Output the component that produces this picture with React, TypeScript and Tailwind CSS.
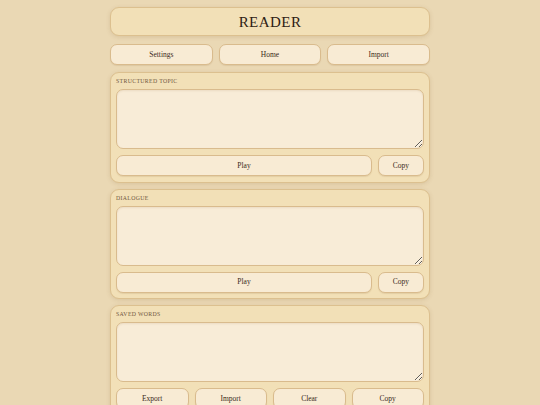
import * as React from 'react'

const serif = { fontFamily: '"Liberation Serif", Georgia, serif' }

function Btn({ label, className = '' }: { label: string; className?: string }) {
  return (
    <button
      type="button"
      className={`h-[21px] rounded-[7px] border border-[#d9bb8d] bg-[#f8ebd4] text-[7.5px] text-[#3a2a1a] shadow-[0_1px_1px_rgba(150,110,60,0.15)] ${className}`}
    >
      {label}
    </button>
  )
}

function Section({ title, children }: { title: string; children: React.ReactNode }) {
  return (
    <section className="rounded-[9px] border border-[#dcc08f] bg-[#f2e0b7] px-[5px] pb-[5.5px] pt-[3px] shadow-[0_1px_4px_rgba(140,100,50,0.18)]">
      <div className="mb-[4px] h-[9px] text-[5.8px] uppercase leading-[10px] tracking-[0.06em] text-[#6f5640]">
        {title}
      </div>
      <textarea className="block h-[60px] w-full rounded-[7px] border border-[#d9bb8d] bg-[#f8ecd7] shadow-[inset_0_1px_2px_rgba(150,110,60,0.12)] outline-none" />
      <div className="mt-[6px] flex gap-[6px]">{children}</div>
    </section>
  )
}

export default function App() {
  return (
    <div className="min-h-[405px] bg-[#ead8b4]" style={serif}>
      <div className="mx-auto flex w-[320px] flex-col gap-[6px] pt-[7px]">
        <header className="flex h-[29px] items-center justify-center rounded-[9px] border border-[#dcc08f] bg-[#f2e0b7] pt-[1px] shadow-[0_1px_4px_rgba(140,100,50,0.18)]">
          <h1 className="text-[15px] tracking-[0.03em] text-[#2f2114]">READER</h1>
        </header>
        <nav className="mb-[1px] mt-[2px] grid grid-cols-3 gap-[6px]">
          <Btn label="Settings" />
          <Btn label="Home" />
          <Btn label="Import" />
        </nav>
        <Section title="Structured Topic">
          <Btn label="Play" className="flex-1" />
          <Btn label="Copy" className="w-[46px]" />
        </Section>
        <Section title="Dialogue">
          <Btn label="Play" className="flex-1" />
          <Btn label="Copy" className="w-[46px]" />
        </Section>
        <Section title="Saved Words">
          <Btn label="Export" className="flex-1" />
          <Btn label="Import" className="flex-1" />
          <Btn label="Clear" className="flex-1" />
          <Btn label="Copy" className="flex-1" />
        </Section>
      </div>
    </div>
  )
}
